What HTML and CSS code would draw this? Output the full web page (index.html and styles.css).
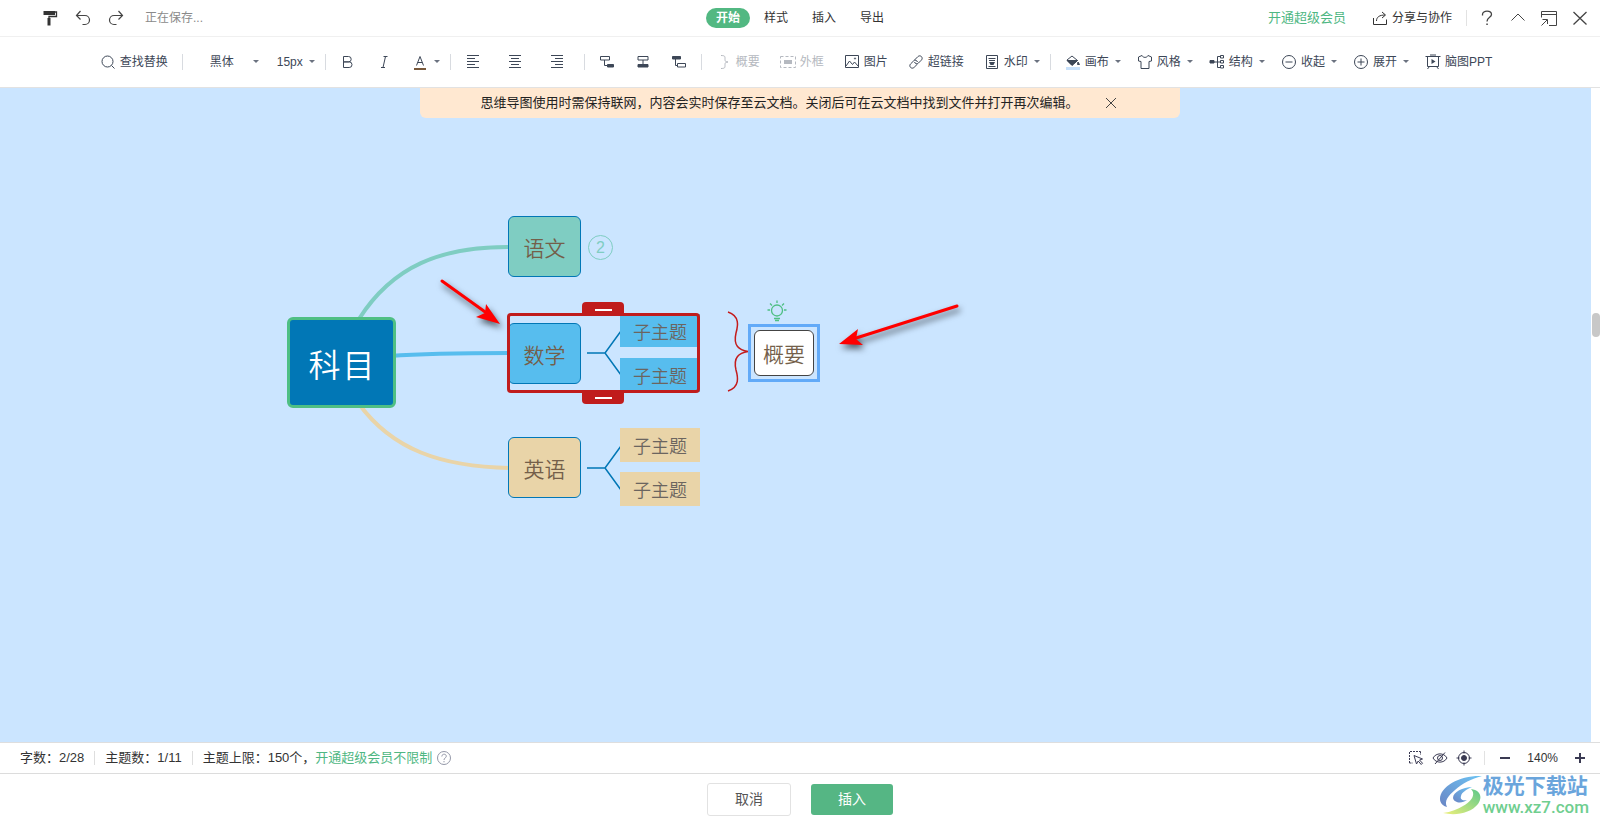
FILE: index.html
```
<!DOCTYPE html>
<html lang="zh-CN">
<head>
<meta charset="utf-8">
<meta name="viewport" content="width=device-width, initial-scale=1">
<title>思维导图</title>
<link rel="stylesheet" href="styles.css">
</head>
<body>
<svg class="defs" aria-hidden="true">
  <symbol id="caret" viewBox="0 0 6 16"><path d="M0 6h6L3 9z" fill="currentColor"/></symbol>
</svg>
<div class="app">
  <header class="topbar">
    <div class="topbar-left">
      <button class="icon-btn" aria-label="格式刷"><svg class="icon" viewBox="0 0 16 16"><path d="M1.500 1H13v4H1.500z" fill="#333" stroke="none"/><path d="M13 2h1.500v4.500H7V9" stroke="#333" stroke-width="1.300"/><path d="M5.500 8h3v7.500h-3z" fill="#333" stroke="none"/></svg></button>
      <button class="icon-btn" aria-label="撤销"><svg class="icon" viewBox="0 0 16 16"><path d="M5.500 1L1.500 5.500l4 4M1.500 5.500h8.500a4.500 4.500 0 0 1 0 9H7.500" stroke-width="1.200"/></svg></button>
      <button class="icon-btn" aria-label="恢复"><svg class="icon" viewBox="0 0 16 16"><path d="M10.500 1l4 4.500-4 4M14.500 5.500H6a4.500 4.500 0 0 0 0 9h2.500" stroke-width="1.200"/></svg></button>
      <span class="saving">正在保存...</span>
    </div>
    <nav class="tabs">
      <button class="tab tab-active">开始</button>
      <button class="tab">样式</button>
      <button class="tab">插入</button>
      <button class="tab">导出</button>
    </nav>
    <div class="topbar-right">
      <a class="vip" href="#">开通超级会员</a>
      <button class="share"><svg class="icon" viewBox="0 0 16 16"><path d="M1.500 8v6.500h13V9.500M4.500 11c0-4 3-6 8.500-6M10 2l3.500 3L10 8"/></svg>分享与协作</button>
      <span class="rule"></span>
      <div class="window-btns">
        <button class="icon-btn" aria-label="帮助"><svg class="icon" viewBox="0 0 16 16"><path d="M3.500 5.500v-1c0-4.500 9-4.500 9 0C12.500 7.500 8 7 8 11.500" stroke-width="1.300"/><path d="M7.300 13.500h1.500V15H7.300z" fill="#444" stroke="none"/></svg></button>
        <button class="icon-btn" aria-label="收起工具栏"><svg class="icon" viewBox="0 0 16 16"><path d="M1.500 10.500L8 4l6.500 6.500"/></svg></button>
        <button class="icon-btn" aria-label="窗口"><svg class="icon" viewBox="0 0 16 16"><path d="M.5 7.500v-6h15v14H8M.5 4.500h15M.5 15.500L6 10M1.500 9.500h5V14"/></svg></button>
        <button class="icon-btn" aria-label="关闭"><svg class="icon" viewBox="0 0 16 16"><path d="M1.500 2l13 12.500M14.500 2L1.500 14.500" stroke-width="1.300"/></svg></button>
      </div>
    </div>
  </header>

  <div class="toolbar" role="toolbar">
    <div class="group">
      <button class="tool"><svg class="icon" viewBox="0 0 16 16"><circle cx="7.500" cy="7.500" r="5.500"/><path d="M11.500 11.500l3 3"/></svg>查找替换</button>
    </div>
    <div class="group group-font">
      <label class="pick"><select class="select select-font" aria-label="字体"><option>黑体</option></select><svg class="caret"><use href="#caret"/></svg></label>
      <label class="pick"><select class="select select-size" aria-label="字号"><option>15px</option></select><svg class="caret"><use href="#caret"/></svg></label>
    </div>
    <div class="group group-menu">
      <button class="tool" aria-label="加粗"><svg class="icon" viewBox="0 0 16 16"><path d="M3.500 2.500h5a2.700 2.700 0 0 1 0 5.400h-5zM3.500 7.900h5.700a2.800 2.800 0 0 1 0 5.600H3.500z"/></svg></button>
      <button class="tool" aria-label="斜体"><svg class="icon" viewBox="0 0 16 16"><path d="M7.500 2.500h4M5 13.500h4M9.500 2.500l-2.500 11"/></svg></button>
      <button class="tool" aria-label="字体颜色"><svg class="icon" viewBox="0 0 16 16"><path d="M4.500 11.500L8 2.500l3.500 9M5.700 8.500h4.600"/><path d="M2 14h12v2H2z" fill="#78583b" stroke="none"/></svg><svg class="caret"><use href="#caret"/></svg></button>
    </div>
    <div class="group group-align">
      <button class="tool" aria-label="左对齐"><svg class="icon" viewBox="0 0 16 16"><path d="M2 1.500h12M2 4.500h8M2 7.500h12M2 10.500h8M2 13.500h12"/></svg></button>
      <button class="tool" aria-label="居中"><svg class="icon" viewBox="0 0 16 16"><path d="M2 1.500h12M4 4.500h8M2 7.500h12M4 10.500h8M2 13.500h12"/></svg></button>
      <button class="tool" aria-label="右对齐"><svg class="icon" viewBox="0 0 16 16"><path d="M2 1.500h12M6 4.500h8M2 7.500h12M6 10.500h8M2 13.500h12"/></svg></button>
    </div>
    <div class="group">
      <button class="tool" aria-label="子主题"><svg class="icon" viewBox="0 0 16 16"><path d="M1.500 2.500h9v3.500h-9zM5.500 6v5.500H8"/><path d="M8.500 10.500h6v2.500h-6z" fill="currentColor"/></svg></button>
      <button class="tool" aria-label="同级主题"><svg class="icon" viewBox="0 0 16 16"><path d="M3 2.500h10v3.500H3zM8 6v4.500"/><path d="M3 10.500h10v2.500H3z" fill="currentColor"/></svg></button>
      <button class="tool" aria-label="父主题"><svg class="icon" viewBox="0 0 16 16"><path d="M1.500 2.500h8v2.500h-8z" fill="currentColor"/><path d="M4.500 5v6.500h2M6.500 9.500h8V13h-8z"/></svg></button>
    </div>
    <div class="group group-menu">
      <button class="tool" disabled><svg class="icon" viewBox="0 0 16 16"><path d="M5 1.500c4 0 4 1 4 3v1c0 2 1 2.500 3 2.500-2 0-3 .5-3 2.500v1c0 2 0 3-4 3"/></svg>概要</button>
      <button class="tool" disabled><svg class="icon" viewBox="0 0 16 16"><path d="M.5 2.500h15v11H.5z" stroke-dasharray="3 2"/><path d="M4 6h8v4H4z" fill="currentColor" stroke="none"/></svg>外框</button>
      <button class="tool"><svg class="icon" viewBox="0 0 16 16"><path d="M1.500 1.500h13v12h-13zM2 12l3.500-5 3 3.500 2-2.500 4 4.500"/><circle cx="11" cy="4.500" r=".6"/></svg>图片</button>
      <button class="tool"><svg class="icon" viewBox="0 0 16 16"><path d="M6.500 6l3.300-3.300c2.500-2.500 6 1 3.500 3.500L10.500 9c-1.300 1.300-3.500.8-4-1M9.500 10l-3.300 3.300c-2.500 2.500-6-1-3.500-3.500L5.500 7c1.300-1.300 3.500-.8 4 1"/></svg>超链接</button>
      <button class="tool"><svg class="icon" viewBox="0 0 16 16"><path d="M2.500 1.500h11v13h-11zM4.500 4.500h7M5 6.500h6M4.500 12.500h7"/><path d="M5 8h6l-1.500 3h-3z" fill="currentColor" stroke="none"/></svg>水印<svg class="caret"><use href="#caret"/></svg></button>
    </div>
    <div class="group group-canvas">
      <button class="tool"><svg class="icon" viewBox="0 0 16 16"><path d="M1 13h14v3H1z" fill="#c8e1fb" stroke="none"/><path d="M2 6l5-4 5.500 4.500L7 11z"/><path d="M2 6.500h10.500L7 11.500zM13 8l1.500 2.500h-2z" fill="currentColor"/></svg>画布<svg class="caret"><use href="#caret"/></svg></button>
      <button class="tool"><svg class="icon" viewBox="0 0 16 16"><path d="M5 1.500L1.500 3v4l2.500.5v7h8v-7l2.500-.5V3L11 1.500c-1 2.500-5 2.500-6 0z"/></svg>风格<svg class="caret"><use href="#caret"/></svg></button>
      <button class="tool"><svg class="icon" viewBox="0 0 16 16"><path d="M1 6.500h4v2.500H1z" fill="currentColor"/><path d="M5 8h6M8.500 2.500v11M8.500 2.500H11M8.500 13.500H11M11.500 1.500h3v2.500h-3zM11.500 6.500h3V9h-3zM11.500 11.500h3V14h-3z"/></svg>结构<svg class="caret"><use href="#caret"/></svg></button>
      <button class="tool"><svg class="icon" viewBox="0 0 16 16"><circle cx="8" cy="8" r="6.500"/><path d="M4.500 8h7"/></svg>收起<svg class="caret"><use href="#caret"/></svg></button>
      <button class="tool"><svg class="icon" viewBox="0 0 16 16"><circle cx="8" cy="8" r="6.500"/><path d="M4.500 8h7M8 4.500v7"/></svg>展开<svg class="caret"><use href="#caret"/></svg></button>
      <button class="tool"><svg class="icon" viewBox="0 0 16 16"><path d="M.5 2.500h15M2.500 3v9.500h11V3M5 1h6M2.500 15l2-2.500M13.500 15l-2-2.500"/><path d="M6.500 5l4 2.500-4 2.500z" fill="currentColor" stroke="none"/></svg>脑图PPT</button>
    </div>
  </div>

  <main class="workspace">
    <div class="canvas">
      <svg class="links" width="1000" height="520" viewBox="0 0 1000 520" aria-hidden="true">
        <g fill="none" stroke-width="4">
          <path d="M359 231C392 179 440 158 512 159" stroke="#7fcdc2"/>
          <path d="M390 268Q430 265 512 265" stroke="#57bdee"/>
          <path d="M359 316C392 361 440 379 512 380" stroke="#e9d4a8"/>
        </g>
        <g fill="none" stroke="#0177b6" stroke-width="1.500">
          <path d="M587 265h18M621 243l-16 22 16 22"/>
          <path d="M587 380h18M621 358l-16 22 16 22"/>
        </g>
        <path d="M728 224c12 4 10 14 8 21-3 13 3 17 12 18.500-9 1.500-15 5.500-12 18.500 2 7 4 17-8 21" fill="none" stroke="#c41c1c" stroke-width="1.500"/>
        <g fill="none" stroke="#4fbf84" stroke-width="1.300">
          <circle cx="777" cy="222.500" r="5.500"/>
          <path d="M774 230.500h6M775 232.500h4M777 212.500v2.500M767.500 222h2.500M784 222h2.500M770 215.500l2 2M784 215.500l-2 2"/>
        </g>
      </svg>

      <div class="node node-root"><span>科</span><span>目</span></div>
      <div class="node node-topic node-chinese">语文</div>
      <button class="count" aria-label="展开2个子主题">2</button>
      <div class="node node-topic node-math">数学</div>
      <div class="node node-sub node-math-a">子主题</div>
      <div class="node node-sub node-math-b">子主题</div>
      <div class="node node-topic node-english">英语</div>
      <div class="node node-sub node-english-a">子主题</div>
      <div class="node node-sub node-english-b">子主题</div>
      <div class="range"><span class="handle handle-top"></span><span class="handle handle-bottom"></span></div>
      <div class="summary"><div class="node node-summary">概要</div></div>

      <svg class="arrows" width="1000" height="520" viewBox="0 0 1000 520" aria-hidden="true">
        <g fill="#f00" stroke="#f00">
          <path d="M442 193l46 33" stroke-width="3" stroke-linecap="round"/>
          <path d="M500 236l-14-20-1 9-9 4z" stroke="none"/>
          <path d="M957 218l-104 33" stroke-width="3" stroke-linecap="round"/>
          <path d="M839 256l19-15-2 10 7 6z" stroke="none"/>
        </g>
      </svg>

      <div class="notice">
        <span>思维导图使用时需保持联网，内容会实时保存至云文档。关闭后可在云文档中找到文件并打开再次编辑。</span>
        <button class="icon-btn" aria-label="关闭提示"><svg class="icon" viewBox="0 0 16 16"><path d="M3 3l10 10M13 3L3 13"/></svg></button>
      </div>
    </div>
    <div class="scrollbar"><span class="thumb"></span></div>
  </main>

  <div class="status">
    <div class="stats">
      <span class="stat">字数：2/28</span>
      <span class="stat">主题数：1/11</span>
      <span class="stat">主题上限：150个，<a class="vip" href="#">开通超级会员不限制</a><svg class="icon hint" viewBox="0 0 16 16"><circle cx="8" cy="8" r="6.500"/><path d="M5.800 6.500c0-3 4.500-3 4.500-.3C10.300 8 8 7.800 8 10M8 11v1.300"/></svg></span>
    </div>
    <div class="view-tools">
      <button class="icon-btn" aria-label="框选"><svg class="icon" viewBox="0 0 16 16"><path d="M1.500 13V1.500H12.500" stroke-dasharray="2 1"/><path d="M12.500 1.500V5M1.500 13H5" stroke-dasharray="2 1"/><path d="M6 5.500l2.500 8.500 1.700-3 3 3.500 1.300-1.300-3-3.200 3-1z"/></svg></button>
      <button class="icon-btn" aria-label="隐藏"><svg class="icon" viewBox="0 0 16 16"><path d="M1 8c3-5.500 11-5.500 14 0-3 5.500-11 5.500-14 0zM3 14L13 2.500"/><circle cx="8" cy="8" r="2.500"/></svg></button>
      <button class="icon-btn" aria-label="定位"><svg class="icon" viewBox="0 0 16 16"><circle cx="8" cy="8" r="5.500"/><path d="M8 .5v3M8 12.500v3M.5 8h3M12.500 8h3"/><circle cx="8" cy="8" r="2.500" fill="currentColor"/></svg></button>
      <span class="rule"></span>
      <button class="icon-btn" aria-label="缩小"><svg class="icon" viewBox="0 0 16 16"><path d="M3 8h10" stroke-width="2"/></svg></button>
      <span class="zoom">140%</span>
      <button class="icon-btn" aria-label="放大"><svg class="icon" viewBox="0 0 16 16"><path d="M3 8h10M8 3v10" stroke-width="2"/></svg></button>
    </div>
  </div>

  <footer class="actions">
    <button class="btn">取消</button>
    <button class="btn btn-primary">插入</button>
    <div class="brand">
      <svg class="brand-logo" viewBox="0 0 44 40" aria-hidden="true">
        <defs>
          <linearGradient id="lb" x1="0" y1="1" x2="1" y2="0"><stop offset="0" stop-color="#6a85c4"/><stop offset="1" stop-color="#6cc4f4"/></linearGradient>
          <linearGradient id="lg" x1="0" y1="1" x2="1" y2="0"><stop offset="0" stop-color="#eef07a"/><stop offset="1" stop-color="#5cc88a"/></linearGradient>
        </defs>
        <path d="M43 1C22 0 1 11 1 24c0 4 3 7 7 8-3-6 1-11 8-17C24 8 32 4 43 1z" fill="url(#lb)"/>
        <path d="M33 12c-9 0-19 5-19 11 1 5 9 6 14 2-5 1-7-1-6-4 1-4 5-6 11-9z" fill="url(#lb)"/>
        <path d="M32 14c5 5 1 12-8 17-5 3-12 6-20 7 13 3 28 0 35-9 5-7 2-14-7-15z" fill="url(#lg)"/>
      </svg>
      <div class="brand-text"><span class="brand-name">极光下载站</span><span class="brand-url">www.xz7.com</span></div>
    </div>
  </footer>
</div>
</body>
</html>
```
FILE: styles.css
```
* { box-sizing: border-box; }

body {
  margin: 0;
  font: 12px/18px "Liberation Sans", "Noto Sans CJK SC", sans-serif;
  color: #333;
  background: #fff;
}

button, select {
  margin: 0;
  padding: 0;
  border: 0;
  background: none;
  font: inherit;
  color: inherit;
}

a { text-decoration: none; }

.defs { position: absolute; width: 0; height: 0; }

.app {
  display: flex;
  flex-direction: column;
  height: 100vh;
}

.icon {
  flex: none;
  display: block;
  width: 16px;
  height: 16px;
  fill: none;
  stroke: currentColor;
}

.icon-btn { display: block; color: #444; }

.rule { width: 1px; height: 16px; background: #e2e2e2; }

.vip { color: #4fb783; font-size: 13px; }

/* Top bar */
.topbar {
  display: grid;
  grid-template-columns: 1fr auto 1fr;
  align-items: center;
  height: 37px;
  border-bottom: 1px solid #f0f0f0;
}

.topbar-left {
  display: flex;
  align-items: center;
  gap: 17px;
  padding-left: 42px;
}

.saving { padding-left: 4px; color: #8a8a8a; }

.tabs { display: flex; gap: 4px; }

.tab {
  height: 20px;
  padding: 0 10px;
  border-radius: 10px;
  line-height: 20px;
}

.tab-active { background: #52b882; color: #fff; font-weight: bold; }

.topbar-right {
  display: flex;
  align-items: center;
  justify-content: flex-end;
  padding-right: 12px;
}

.share { display: flex; align-items: center; gap: 4px; margin: 0 14px 0 26px; }

.window-btns { display: flex; gap: 15px; padding-left: 12px; }

/* Toolbar */
.toolbar {
  display: flex;
  justify-content: center;
  align-items: center;
  height: 51px;
  padding-right: 8px;
  border-bottom: 1px solid #e2e2e2;
  color: #3d4757;
}

.group {
  display: flex;
  align-items: center;
  gap: 20px;
  height: 16px;
  padding: 0 14px;
  border-right: 1px solid #d8dbe0;
}

.group:first-child { padding-left: 0; }
.group:last-child { padding-right: 0; border-right: 0; }
.group-menu { padding-right: 10px; }
.group-font { gap: 18px; padding: 0 10px 0 27px; }
.group-align { gap: 26px; padding-right: 19px; }
.group-canvas { gap: 16px; }

.tool {
  display: flex;
  align-items: center;
  gap: 4px;
  white-space: nowrap;
}

.tool:disabled { color: #b5b9c0; }

.caret {
  flex: none;
  width: 6px;
  height: 16px;
  color: #6b7280;
}

.tool .caret { margin-left: 2px; }

.pick { display: flex; align-items: center; }
.select { appearance: none; outline: 0; }
.select-font { width: 43px; }
.select-size { width: 32px; }

/* Workspace */
.workspace { flex: 1; display: flex; min-height: 0; }

.canvas {
  position: relative;
  flex: 1;
  overflow: hidden;
  background: #cbe5ff;
}

.scrollbar { position: relative; width: 9px; background: #fff; }

.thumb {
  position: absolute;
  top: 225px;
  right: 0;
  width: 8px;
  height: 24px;
  border-radius: 4px;
  background: #c8c8c8;
}

.notice {
  display: flex;
  justify-content: center;
  align-items: center;
  gap: 24px;
  position: absolute;
  top: 0;
  left: 50%;
  width: 760px;
  height: 30px;
  margin-left: -376px;
  border-radius: 0 0 6px 6px;
  background: #ffe8d1;
  color: #222;
  font-size: 13px;
  white-space: nowrap;
}

.links, .arrows { position: absolute; top: 0; left: 0; }
.arrows { filter: drop-shadow(2px 4px 3px rgba(0, 0, 0, .6)); pointer-events: none; }

.node {
  display: flex;
  align-items: center;
  justify-content: center;
  position: absolute;
  font-family: "Noto Sans CJK SC", sans-serif;
  font-weight: 350;
}

.node-root {
  gap: 2px;
  left: 287px;
  top: 229px;
  width: 109px;
  height: 91px;
  border: 3px solid #4fbf84;
  border-radius: 6px;
  background: #0177b6;
  color: #fff;
  font-size: 32px;
}

.node-topic {
  left: 508px;
  width: 73px;
  height: 61px;
  border: 1px solid #0177b6;
  border-radius: 6px;
  color: #745f4a;
  font-size: 21px;
}

.node-chinese { top: 128px; background: #7fcdc2; }
.node-math { top: 235px; background: #57bdee; }
.node-english { top: 349px; background: #e9d4a8; }

.node-sub {
  left: 620px;
  width: 80px;
  height: 34px;
  color: #6b655f;
  font-size: 18px;
}

.node-math-a { top: 226px; height: 33px; background: #57bdee; }
.node-math-b { top: 270px; background: #57bdee; }
.node-english-a { top: 340px; background: #e9d4a8; }
.node-english-b { top: 384px; background: #e9d4a8; }

.count {
  position: absolute;
  left: 588px;
  top: 147px;
  width: 25px;
  height: 25px;
  border: 1px solid #7fcdc2;
  border-radius: 50%;
  color: #7fcdc2;
  font-size: 16px;
}

.range {
  position: absolute;
  left: 507px;
  top: 225px;
  width: 193px;
  height: 80px;
  border: 3px solid #c01c1c;
  border-radius: 4px;
}

.handle {
  display: flex;
  align-items: center;
  justify-content: center;
  position: absolute;
  left: 72px;
  width: 42px;
  height: 13px;
  background: #c01c1c;
}

.handle::after { content: ""; width: 17px; height: 2px; background: #fff; }
.handle-top { top: -14px; border-radius: 4px 4px 0 0; padding-top: 3px; }
.handle-bottom { bottom: -14px; border-radius: 0 0 4px 4px; }

.summary {
  position: absolute;
  left: 748px;
  top: 236px;
  width: 72px;
  height: 58px;
  padding: 3px;
  border: 3px solid #62aaf8;
}

.node-summary {
  position: static;
  height: 46px;
  border: 1px solid #444;
  border-radius: 6px;
  background: #fff;
  color: #745f4a;
  font-size: 21px;
}

/* Status bar */
.status {
  display: flex;
  align-items: center;
  justify-content: space-between;
  height: 32px;
  padding: 0 12px 0 20px;
  border-top: 1px solid #dedede;
  border-bottom: 1px solid #dcdcdc;
  font-size: 13px;
}

.stats { display: flex; align-items: center; }

.stat {
  display: flex;
  align-items: center;
  height: 14px;
  padding-right: 10px;
  white-space: nowrap;
}

.stat + .stat { padding-left: 10px; border-left: 1px solid #dedede; }

.hint { margin-left: 4px; color: #9498a8; }

.view-tools { display: flex; align-items: center; gap: 8px; font-size: 12px; }
.view-tools .icon-btn { color: #3a3a52; }
.view-tools .rule { height: 14px; margin: 0 4px; }
.zoom { padding: 0 6px; }

/* Footer */
.actions {
  display: flex;
  align-items: center;
  justify-content: center;
  gap: 20px;
  position: relative;
  height: 50px;
  font-size: 14px;
}

.btn {
  width: 84px;
  height: 33px;
  border: 1px solid #e2e2e2;
  border-radius: 3px;
  color: #555;
}

.btn-primary { width: 82px; height: 31px; border: 0; background: #55b684; color: #fff; }

.brand {
  display: flex;
  align-items: center;
  position: absolute;
  right: 11px;
  top: 0;
}

.brand-logo { width: 44px; height: 40px; }
.brand-text { display: flex; flex-direction: column; white-space: nowrap; }
.brand-name { color: #6aa5dc; font-size: 21px; font-weight: bold; line-height: 24px; }
.brand-url { color: #6fce8f; font: 500 17px/18px Roboto, sans-serif; }
```
